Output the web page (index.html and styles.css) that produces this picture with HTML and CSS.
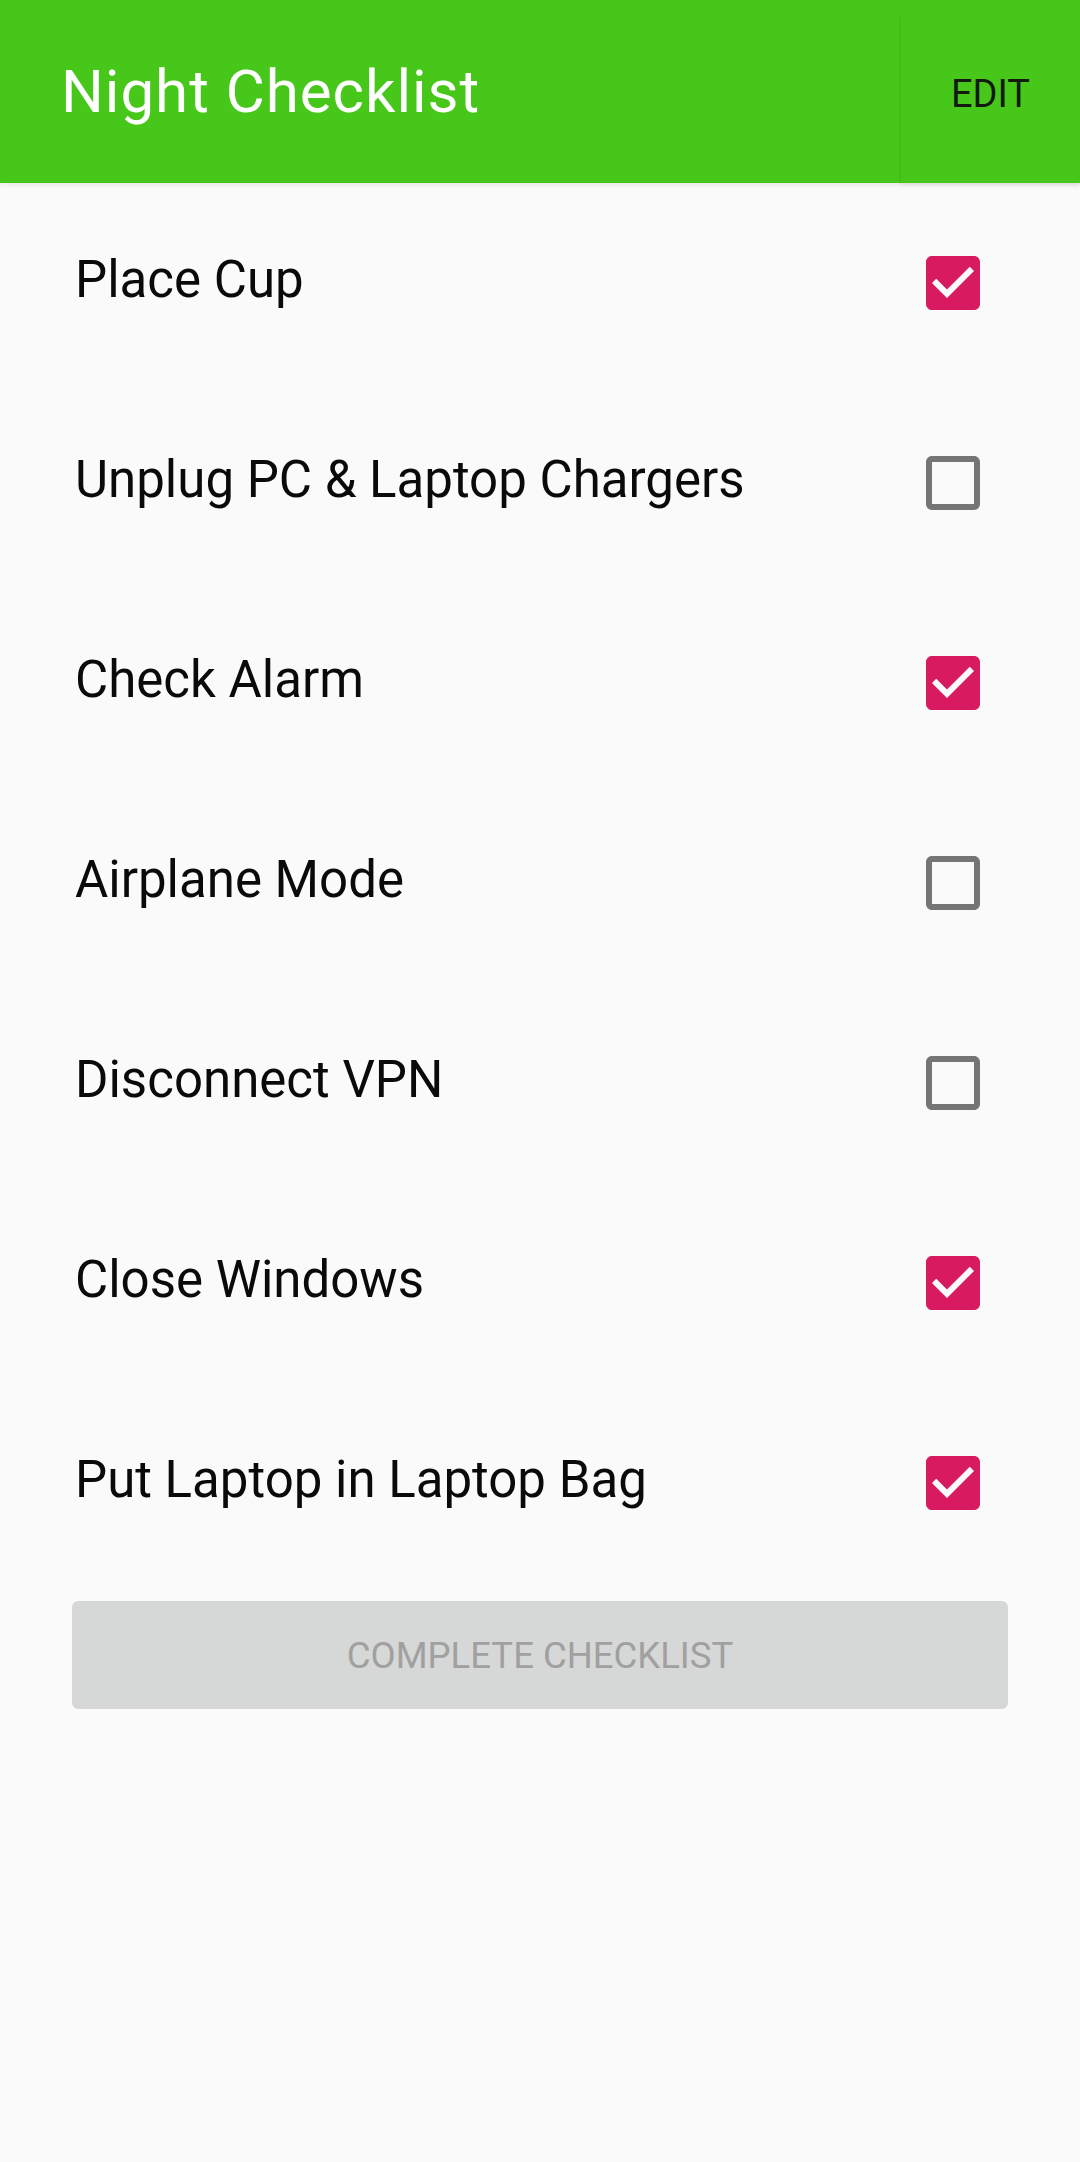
FILE: index.html
```html
<!DOCTYPE html>
<html>
<head>
<meta charset="utf-8">
<link rel="stylesheet" href="styles.css">
</head>
<body>
<header class="appbar">
  <h1 class="title">Night Checklist</h1>
  <div class="edit-btn">EDIT</div>
</header>
<main class="list">
  <div class="row"><span class="label">Place Cup</span>
    <svg class="cb checked" viewBox="0 0 24 24"><path d="M19 3H5c-1.11 0-2 .9-2 2v14c0 1.1.89 2 2 2h14c1.11 0 2-.9 2-2V5c0-1.1-.89-2-2-2zm-9 14l-5-5 1.41-1.41L10 14.17l7.59-7.59L19 8l-9 9z"/></svg></div>
  <div class="row"><span class="label">Unplug PC &amp; Laptop Chargers</span>
    <svg class="cb" viewBox="0 0 24 24"><path d="M19 5v14H5V5h14m0-2H5c-1.11 0-2 .9-2 2v14c0 1.1.89 2 2 2h14c1.1 0 2-.9 2-2V5c0-1.1-.9-2-2-2z"/></svg></div>
  <div class="row"><span class="label">Check Alarm</span>
    <svg class="cb checked" viewBox="0 0 24 24"><path d="M19 3H5c-1.11 0-2 .9-2 2v14c0 1.1.89 2 2 2h14c1.11 0 2-.9 2-2V5c0-1.1-.89-2-2-2zm-9 14l-5-5 1.41-1.41L10 14.17l7.59-7.59L19 8l-9 9z"/></svg></div>
  <div class="row"><span class="label">Airplane Mode</span>
    <svg class="cb" viewBox="0 0 24 24"><path d="M19 5v14H5V5h14m0-2H5c-1.11 0-2 .9-2 2v14c0 1.1.89 2 2 2h14c1.1 0 2-.9 2-2V5c0-1.1-.9-2-2-2z"/></svg></div>
  <div class="row"><span class="label">Disconnect VPN</span>
    <svg class="cb" viewBox="0 0 24 24"><path d="M19 5v14H5V5h14m0-2H5c-1.11 0-2 .9-2 2v14c0 1.1.89 2 2 2h14c1.1 0 2-.9 2-2V5c0-1.1-.9-2-2-2z"/></svg></div>
  <div class="row"><span class="label">Close Windows</span>
    <svg class="cb checked" viewBox="0 0 24 24"><path d="M19 3H5c-1.11 0-2 .9-2 2v14c0 1.1.89 2 2 2h14c1.11 0 2-.9 2-2V5c0-1.1-.89-2-2-2zm-9 14l-5-5 1.41-1.41L10 14.17l7.59-7.59L19 8l-9 9z"/></svg></div>
  <div class="row"><span class="label">Put Laptop in Laptop Bag</span>
    <svg class="cb checked" viewBox="0 0 24 24"><path d="M19 3H5c-1.11 0-2 .9-2 2v14c0 1.1.89 2 2 2h14c1.11 0 2-.9 2-2V5c0-1.1-.89-2-2-2zm-9 14l-5-5 1.41-1.41L10 14.17l7.59-7.59L19 8l-9 9z"/></svg></div>
  <div class="complete">COMPLETE CHECKLIST</div>
</main>
</body>
</html>
```
FILE: styles.css
```css
html, body {
  margin: 0;
  padding: 0;
  background: #fafafa;
  font-family: Roboto, "Noto Sans", sans-serif;
}
.appbar {
  display: flex;
  height: 183px;
  background: #48c71b;
  box-shadow: 0 2px 4px rgba(0,0,0,0.08);
}
.title {
  flex: 1;
  margin: 0;
  padding-left: 61px;
  font-size: 60px;
  letter-spacing: 1px;
  font-weight: 400;
  color: #ffffff;
  line-height: 183px;
  height: 183px;
}
.edit-btn {
  width: 180px;
  margin-top: 15px;
  height: 168px;
  box-sizing: border-box;
  border-left: 1px solid rgba(0,0,0,0.07);
  box-shadow: 0 3px 4px rgba(0,0,0,0.06);
  display: flex;
  align-items: center;
  justify-content: center;
  padding-bottom: 10px;
  font-size: 38px;
  color: #111a0c;
}
.list {
  display: flex;
  flex-direction: column;
}
.row {
  height: 200px;
  display: flex;
  align-items: center;
  padding-left: 75px;
  padding-right: 91px;
}
.label {
  flex: 1;
  font-size: 51px;
  color: #0a0a0a;
  margin-bottom: 8px;
}
.cb {
  width: 72px;
  height: 72px;
  fill: #757575;
}
.cb.checked {
  fill: #d81b60;
}
.complete {
  margin: 18px 72px 0 72px;
  height: 108px;
  border-radius: 6px;
  background: #d6d7d7;
  color: #a0a0a0;
  font-size: 36.5px;
  display: flex;
  align-items: center;
  justify-content: center;
}
```
